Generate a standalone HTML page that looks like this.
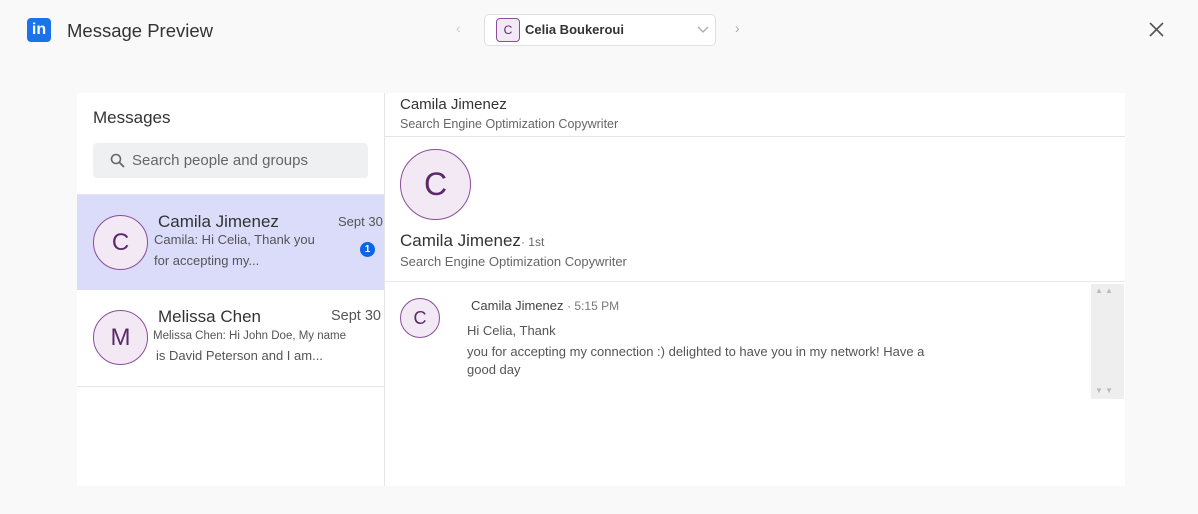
<!DOCTYPE html>
<html><head><meta charset="utf-8"><style>
*{box-sizing:border-box;margin:0;padding:0}
body{width:1198px;height:514px;background:#f9f9f9;font-family:"Liberation Sans",sans-serif;position:relative;overflow:hidden;color:#333}
.a{position:absolute}
.av{position:absolute;border-radius:50%;border:1px solid #8a4d9a;background:#f3e9f5;color:#5a2a6a;display:flex;align-items:center;justify-content:center}
</style></head><body>
<div class="a" style="left:27px;top:18px;width:24px;height:24px;background:#1a73e8;border-radius:4px;color:#fff;font-weight:bold;font-size:16px;line-height:24px;text-align:center">in</div>
<div class="a" style="left:67px;top:20px;font-size:18.5px;color:#333">Message Preview</div>
<div class="a" style="left:456px;top:20px;color:#ccc;font-size:14px">‹</div>
<div class="a" style="left:484px;top:14px;width:232px;height:32px;background:#fff;border:1px solid #e0e0e0;border-radius:5px"></div>
<div class="av" style="left:496px;top:18px;width:24px;height:24px;border-radius:4px;font-size:12px">C</div>
<div class="a" style="left:525px;top:22px;font-size:13px;font-weight:bold;color:#333">Celia Boukeroui</div>
<svg class="a" style="left:697px;top:26px" width="12" height="8"><path d="M1 1l5 5 5-5" stroke="#aaa" fill="none" stroke-width="1.3"/></svg>
<div class="a" style="left:735px;top:20px;color:#aaa;font-size:14px">›</div>
<svg class="a" style="left:1149px;top:22px" width="15" height="15"><path d="M1 1L14 14M14 1L1 14" stroke="#555" stroke-width="1.6"/></svg>

<div class="a" style="left:77px;top:93px;width:1048px;height:393px;background:#fff"></div>
<div class="a" style="left:384px;top:93px;width:1px;height:393px;background:#e5e5e5"></div>
<div class="a" style="left:93px;top:108px;font-size:17px;color:#333">Messages</div>
<div class="a" style="left:93px;top:143px;width:275px;height:35px;background:#eef0f2;border-radius:4px"></div>
<svg class="a" style="left:110px;top:153px" width="15" height="15"><circle cx="6" cy="6" r="4.5" stroke="#666" stroke-width="1.6" fill="none"/><path d="M9.5 9.5L14 14" stroke="#666" stroke-width="1.8"/></svg>
<div class="a" style="left:132px;top:152px;font-size:15px;color:#666">Search people and groups</div>
<div class="a" style="left:77px;top:194px;width:307px;height:1px;background:#e5e5e5"></div>
<div class="a" style="left:77px;top:195px;width:307px;height:95px;background:#dadcfa"></div>
<div class="av" style="left:93px;top:215px;width:55px;height:55px;font-size:24px">C</div>
<div class="a" style="left:158px;top:212px;font-size:17px;color:#333">Camila Jimenez</div>
<div class="a" style="left:338px;top:214px;font-size:13px;color:#555">Sept 30</div>
<div class="a" style="left:154px;top:232px;font-size:13px;color:#555">Camila: Hi Celia, Thank you</div>
<div class="a" style="left:154px;top:253px;font-size:13px;color:#555">for accepting my...</div>
<div class="a" style="left:360px;top:242px;width:15px;height:15px;border-radius:50%;background:#0a66e4;color:#fff;font-size:10px;font-weight:bold;text-align:center;line-height:15px">1</div>
<div class="av" style="left:93px;top:310px;width:55px;height:55px;font-size:24px">M</div>
<div class="a" style="left:158px;top:307px;font-size:17px;color:#333">Melissa Chen</div>
<div class="a" style="left:331px;top:308px;font-size:14.5px;color:#555">Sept 30</div>
<div class="a" style="left:153px;top:330px;font-size:11.5px;color:#555">Melissa Chen: Hi John Doe, My name</div>
<div class="a" style="left:156px;top:348px;font-size:13px;color:#555">is David Peterson and I am...</div>
<div class="a" style="left:77px;top:386px;width:307px;height:1px;background:#e5e5e5"></div>

<div class="a" style="left:400px;top:96px;font-size:15px;color:#333">Camila Jimenez</div>
<div class="a" style="left:400px;top:117px;font-size:12.5px;color:#666">Search Engine Optimization Copywriter</div>
<div class="a" style="left:385px;top:136px;width:740px;height:1px;background:#e5e5e5"></div>
<div class="av" style="left:400px;top:149px;width:71px;height:71px;font-size:32px">C</div>
<div class="a" style="left:400px;top:231px;font-size:17px;color:#333">Camila Jimenez<span style="font-size:12px;color:#666">· 1st</span></div>
<div class="a" style="left:400px;top:254px;font-size:13px;color:#666">Search Engine Optimization Copywriter</div>
<div class="a" style="left:385px;top:281px;width:740px;height:1px;background:#e8e8e8"></div>
<div class="av" style="left:400px;top:298px;width:40px;height:40px;font-size:18px">C</div>
<div class="a" style="left:471px;top:298px;font-size:13px;color:#444">Camila Jimenez <span style="font-size:12px;color:#777">· 5:15 PM</span></div>
<div class="a" style="left:467px;top:323px;font-size:13px;color:#555">Hi Celia, Thank</div>
<div class="a" style="left:467px;top:343px;font-size:13px;color:#555;line-height:18px;width:475px">you for accepting my connection :) delighted to have you in my network! Have a good day</div>
<div class="a" style="left:1091px;top:284px;width:33px;height:115px;background:#eeeeee"></div>
<div class="a" style="left:1095px;top:286px;font-size:8px;color:#bbb">▲ ▲</div>
<div class="a" style="left:1095px;top:386px;font-size:8px;color:#bbb">▼ ▼</div>
</body></html>
